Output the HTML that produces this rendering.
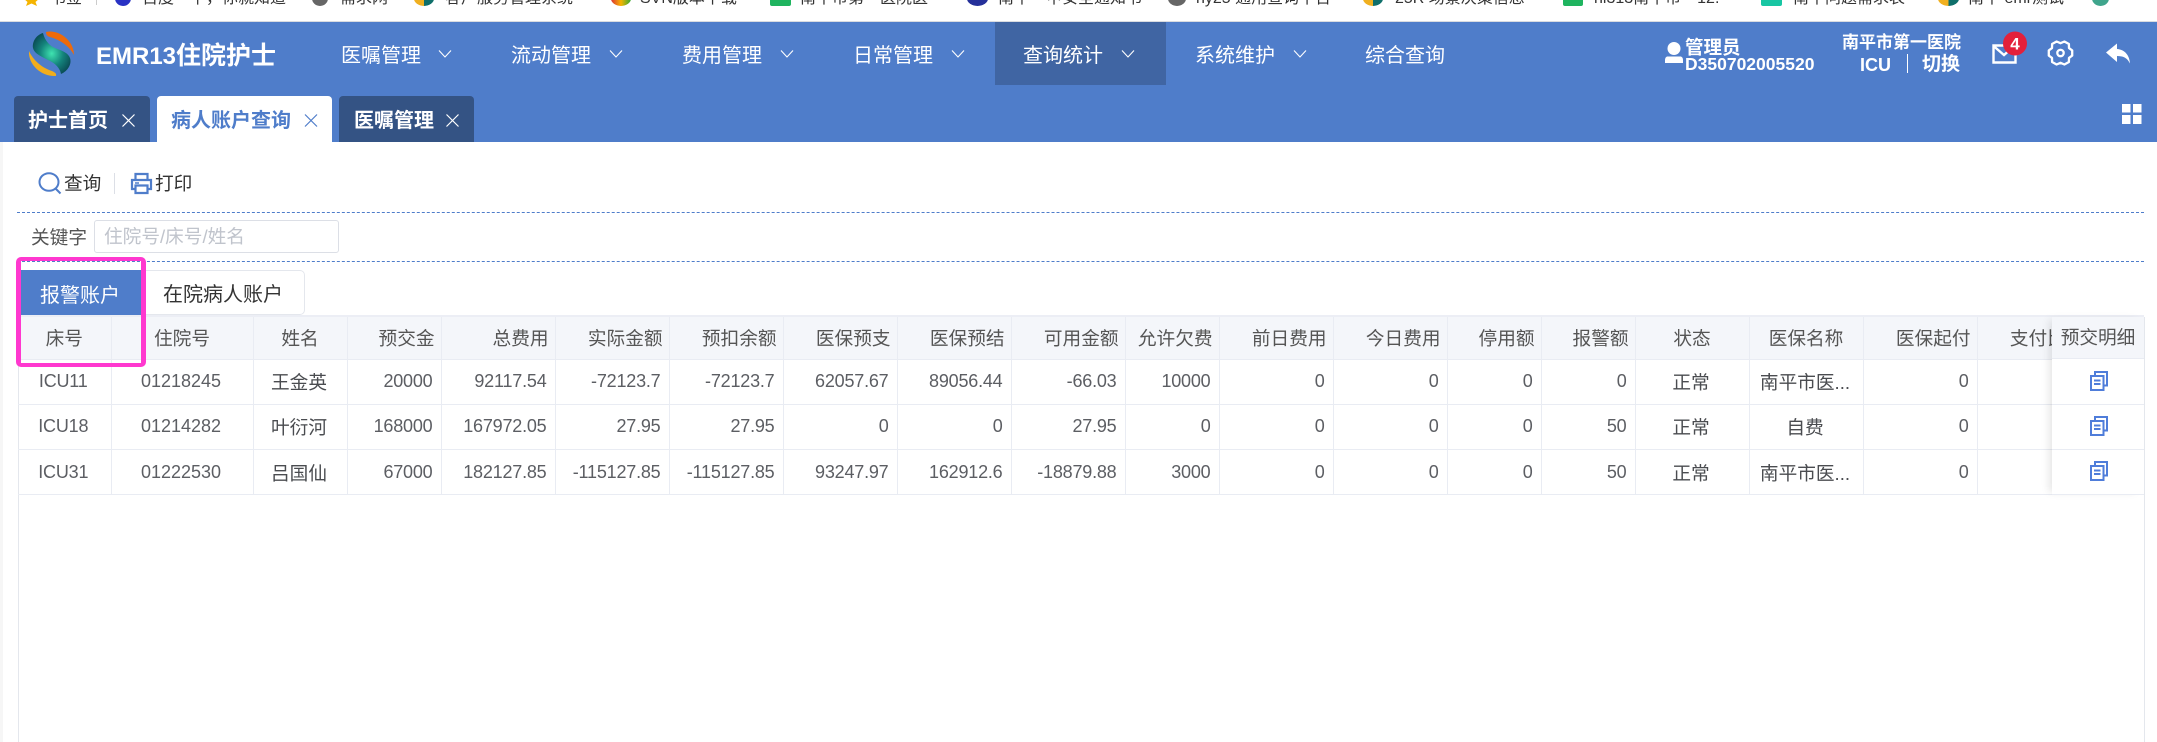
<!DOCTYPE html>
<html lang="zh-CN"><head><meta charset="utf-8"><title>病人账户查询</title>
<style>
*{box-sizing:border-box}
html,body{margin:0;padding:0;width:2157px;height:742px;overflow:hidden;background:#fff;font-family:"Liberation Sans","Noto Sans CJK SC",sans-serif;color:#606266}
.a{position:absolute;white-space:nowrap}
.bm{position:absolute;top:-9px;line-height:16px;font-size:16px;color:#333;white-space:nowrap}
.ic{position:absolute;top:-9px;height:15px;border-radius:50%}
#hd{position:absolute;left:0;top:22px;width:2157px;height:120px;background:#4f7dca}
#top{position:absolute;left:0;top:21px;width:2157px;height:1px;background:#dadce0}
.nav{position:absolute;top:44px;font-size:20px;line-height:24px;color:#fff;white-space:nowrap}
.tab{position:absolute;top:96px;height:46px;border-radius:4px 4px 0 0;background:#345384;color:#fff;font-size:20px;font-weight:bold;line-height:50px}
table{position:absolute;left:18px;top:317px;width:2073px;table-layout:fixed;border-collapse:collapse;font-size:18.67px}
td,th{height:45.3px;padding:0 8px 0 4px;border-right:1px solid #e9ecf3;border-bottom:1px solid #e9ecf3;overflow:hidden;white-space:nowrap;font-weight:normal;text-align:right}
th{background:#f4f6fa;height:42px;padding-right:6px;color:#555}
td{color:#5c5e63;font-size:18px;letter-spacing:-.2px}
td.c{text-align:center;padding:0 2px 0 0}th.c{text-align:center;padding:0}
td.n{letter-spacing:0}
td.z{font-size:18.67px;letter-spacing:0;color:#4a4c50}
</style></head><body>
<!-- bookmarks -->
<svg class="a" style="left:23px;top:-8px" width="17" height="14" viewBox="0 0 17 14"><path d="M8.500 0l2.500 6h6l-4.500 4 1.500 4-5.500-2.500L3 14l1.500-4L0 6h6z" fill="#f5b400"/></svg>
<span class="bm" style="left:50px">书签</span>
<div class="a" style="left:96px;top:0;width:1px;height:5px;background:#ccc"></div>
<div class="ic" style="left:115px;width:16px;background:#2932c4"></div>
<span class="bm" style="left:142px">百度一下，你就知道</span>
<div class="ic" style="left:312px;width:16px;background:#666"></div>
<span class="bm" style="left:340px">需求网</span>
<div class="ic" style="left:414px;width:20px;background:linear-gradient(90deg,#f0b020 50%,#0f6f6a 50%)"></div>
<span class="bm" style="left:445px">客户服务管理系统</span>
<div class="ic" style="left:611px;width:20px;background:linear-gradient(90deg,#d33,#f5b400,#3a3)"></div>
<span class="bm" style="left:640px">SVN版本下载</span>
<div class="ic" style="left:770px;width:21px;border-radius:2px;background:#1fb45f"></div>
<span class="bm" style="left:800px">南平市第一医院医</span>
<div class="ic" style="left:967px;width:21px;background:#25309a"></div>
<span class="bm" style="left:998px">南平一甲安全通知书</span>
<div class="ic" style="left:1168px;width:18px;background:#666"></div>
<span class="bm" style="left:1196px">ny25 通用查询平台</span>
<div class="ic" style="left:1363px;width:20px;background:linear-gradient(90deg,#f0b020 50%,#0f6f6a 50%)"></div>
<span class="bm" style="left:1395px">25R 场景决策信息</span>
<div class="ic" style="left:1563px;width:20px;border-radius:2px;background:#1fb45f"></div>
<span class="bm" style="left:1594px">hi313南平市一12.</span>
<div class="ic" style="left:1761px;width:21px;border-radius:2px;background:#18c6a3"></div>
<span class="bm" style="left:1793px">南平问题需求表</span>
<div class="ic" style="left:1938px;width:21px;background:linear-gradient(90deg,#f0b020 50%,#0f6f6a 50%)"></div>
<span class="bm" style="left:1968px">南平 emr测试</span>
<div class="ic" style="left:2092px;width:17px;background:#3fa58c"></div>
<div id="top"></div>
<div id="hd"></div>
<div class="a" style="left:995px;top:22px;width:171px;height:63px;background:#4065a3"></div>
<!-- logo -->
<svg class="a" style="left:0;top:0" width="100" height="90" viewBox="0 0 100 90">
<defs><radialGradient id="g" cx="50%" cy="50%" r="55%"><stop offset="0" stop-color="#3fe3b0"/><stop offset=".55" stop-color="#14847c"/><stop offset="1" stop-color="#0a4f57"/></radialGradient></defs>
<path d="M46 32C58 29 74 40 74 55C70 47 61 40 50 37Q46 36 46 32Z" fill="#ee6a0a"/>
<path d="M29 51C33 60 42 68 52 71Q57 73 56 76C42 77 28 65 29 51Z" fill="#f2ad1c"/>
<path d="M43 33C36 35 32 42 33 48C34 53 40 56 48 60C55 63 60 68 61 74C68 71 72 64 70 58C68 53 63 51 55 48C50 46 45 41 43 33Z" fill="url(#g)"/>
</svg>
<div class="a" style="left:96px;top:41px;font-size:24px;line-height:30px;font-weight:bold;color:#fff">EMR13<span style="font-size:25px">住院护士</span></div>
<!-- nav -->
<span class="nav" style="left:341px">医嘱管理</span>
<span class="nav" style="left:511px">流动管理</span>
<span class="nav" style="left:682px">费用管理</span>
<span class="nav" style="left:853px">日常管理</span>
<span class="nav" style="left:1023px">查询统计</span>
<span class="nav" style="left:1195px">系统维护</span>
<span class="nav" style="left:1365px">综合查询</span>
<svg class="a" style="left:0;top:0" width="1400" height="70" fill="none" stroke="#fff" stroke-width="1.100"><path d="M439 50.500l6 6.500 6-6.500M610 50.500l6 6.500 6-6.500M781 50.500l6 6.500 6-6.500M952 50.500l6 6.500 6-6.500M1122 50.500l6 6.500 6-6.500M1294 50.500l6 6.500 6-6.500"/></svg>
<!-- user area -->
<svg class="a" style="left:1665px;top:42px" width="18" height="22" viewBox="0 0 18 22" fill="#fff"><ellipse cx="9" cy="6.500" rx="6.500" ry="6.500"/><path d="M2 14.500h14q2 1 2 3.500v3H0v-3q0-2.500 2-3.500z"/></svg>
<div class="a" style="left:1685px;top:37px;font-size:18.500px;line-height:21px;font-weight:bold;color:#fff">管理员</div>
<div class="a" style="left:1685px;top:54px;font-size:17.500px;line-height:20px;font-weight:bold;color:#fff">D350702005520</div>
<div class="a" style="left:1842px;top:33px;font-size:17px;line-height:20px;font-weight:bold;color:#fff">南平市第一医院</div>
<div class="a" style="left:1860px;top:54px;font-size:18px;line-height:22px;font-weight:bold;color:#fff">ICU</div>
<div class="a" style="left:1907px;top:54px;width:1px;height:19px;background:#fff"></div>
<div class="a" style="left:1922px;top:53px;font-size:19px;line-height:24px;font-weight:bold;color:#fff">切换</div>
<svg class="a" style="left:1990px;top:30px" width="40" height="36" viewBox="0 0 40 36"><path d="M3.500 15.500h22v17h-22zM3.500 16l10.500 9 8-7" fill="none" stroke="#fff" stroke-width="2.400"/><circle cx="25" cy="13.500" r="12" fill="#e3203b"/><text x="25" y="19.500" text-anchor="middle" font-size="17" font-weight="bold" fill="#fff" font-family="Liberation Sans">4</text></svg>
<svg class="a" style="left:2047px;top:40px" width="27" height="26" viewBox="0 0 27 26" fill="none" stroke="#fff" stroke-width="2.300" stroke-linejoin="round"><path d="M25.200 10.400V15.600L22 17.900 21.900 22 17.400 24.500 13.500 22.800 9.600 24.500 5.100 22 5 17.900 1.800 15.600V10.400L5 8.100 5.100 4 9.600 1.500 13.500 3.200 17.400 1.500 21.900 4 22 8.100Z"/><circle cx="13.500" cy="13" r="3.200"/></svg>
<svg class="a" style="left:2106px;top:43px" width="25" height="21" viewBox="0 0 25 21" fill="#fff"><path d="M11 0.500L0 9.500 11 19v-6c6 0 10 1.500 13 7.500C23.500 12.500 19 6.500 11 6z"/></svg>
<!-- tabs -->
<div class="tab" style="left:14px;width:136px"><span class="a" style="left:14px">护士首页</span></div>
<div class="tab" style="left:157px;width:175px;background:#fff;color:#4f7dca"><span class="a" style="left:14px">病人账户查询</span></div>
<div class="tab" style="left:339px;width:135px"><span class="a" style="left:15px">医嘱管理</span></div>
<svg class="a" style="left:0;top:110px" width="480" height="20" fill="none" stroke-width="1.200"><path stroke="#fff" d="M122.500 4.500l12 12M134.500 4.500l-12 12M446.500 4.500l12 12M458.500 4.500l-12 12"/><path stroke="#4f7dca" d="M305 4.500l12 12M317 4.500l-12 12"/></svg>
<svg class="a" style="left:2121px;top:104px" width="22" height="20" fill="#fff"><rect x="1" y="0" width="8.500" height="8.500"/><rect x="12" y="0" width="8.500" height="8.500"/><rect x="1" y="11" width="8.500" height="9"/><rect x="12" y="11" width="8.500" height="9"/></svg>
<!-- side strip -->
<div class="a" style="left:0;top:142px;width:3px;height:600px;background:#f6f6f6"></div>
<!-- toolbar -->
<svg class="a" style="left:38px;top:172px" width="24" height="23" viewBox="0 0 24 23" fill="none" stroke="#4f7dca" stroke-width="2"><ellipse cx="11" cy="10" rx="9.500" ry="8.800"/><path d="M17.500 16.500l5 5"/></svg>
<div class="a" style="left:64px;top:172px;font-size:18.670px;line-height:24px;color:#333">查询</div>
<div class="a" style="left:114px;top:173px;width:1px;height:21px;background:#dcdfe6"></div>
<svg class="a" style="left:130px;top:172px" width="23" height="23" viewBox="0 0 23 23" fill="none" stroke="#4f7dca" stroke-width="2.200"><path d="M5.500 8V2h12v6M5.500 17H2V8h19v9h-3.500"/><path d="M5.500 13.500h12V21h-12z"/><path d="M5 11h4" stroke-width="1.500"/></svg>
<div class="a" style="left:155px;top:172px;font-size:18.670px;line-height:24px;color:#333">打印</div>
<div class="a" style="left:17px;top:212px;width:2127px;border-top:1px dashed #4f7dca"></div>
<div class="a" style="left:31px;top:226px;font-size:18.670px;line-height:24px;color:#555">关键字</div>
<div class="a" style="left:94px;top:220px;width:245px;height:33px;border:1px solid #dcdfe6;border-radius:3px"></div>
<div class="a" style="left:104px;top:225px;font-size:18.670px;line-height:24px;color:#c0c4cc">住院号/床号/姓名</div>
<div class="a" style="left:17px;top:261px;width:2127px;border-top:1px dashed #4f7dca"></div>
<!-- sub tabs -->
<div class="a" style="left:135px;top:270px;width:170px;height:45px;border:1px solid #e4e7ed;border-radius:0 5px 5px 0;font-size:20px;line-height:48px;color:#333;padding-left:27px">在院病人账户</div>
<div class="a" style="left:21px;top:270px;width:120px;height:45px;background:#4f7dca;color:#fff;font-size:20px;line-height:52px;text-align:center;padding-right:2px">报警账户</div>
<div class="a" style="left:18px;top:315px;width:2126px;height:2px;background:#eceef5"></div>
<div class="a" style="left:18px;top:317px;width:1px;height:425px;background:#e4e7ed"></div>
<div class="a" style="left:2144px;top:317px;width:1px;height:425px;background:#e4e7ed"></div>
<!-- table -->
<table>
<colgroup><col style="width:93px"><col style="width:142px"><col style="width:94px"><col style="width:94px"><col style="width:114px"><col style="width:114px"><col style="width:114px"><col style="width:114px"><col style="width:114px"><col style="width:114px"><col style="width:94px"><col style="width:114px"><col style="width:114px"><col style="width:94px"><col style="width:94px"><col style="width:114px"><col style="width:114px"><col style="width:114px"><col style="width:114px"></colgroup>
<tr><th class="c">床号</th><th class="c">住院号</th><th class="c">姓名</th><th>预交金</th><th>总费用</th><th>实际金额</th><th>预扣余额</th><th>医保预支</th><th>医保预结</th><th>可用金额</th><th>允许欠费</th><th>前日费用</th><th>今日费用</th><th>停用额</th><th>报警额</th><th class="c">状态</th><th class="c">医保名称</th><th>医保起付</th><th>支付比例</th></tr>
<tr><td class="c">ICU11</td><td class="c n">01218245</td><td class="c z">王金英</td><td>20000</td><td>92117.54</td><td>-72123.7</td><td>-72123.7</td><td>62057.67</td><td>89056.44</td><td>-66.03</td><td>10000</td><td>0</td><td>0</td><td>0</td><td>0</td><td class="c z">正常</td><td class="c z">南平市医...</td><td>0</td><td></td></tr>
<tr><td class="c">ICU18</td><td class="c n">01214282</td><td class="c z">叶衍河</td><td>168000</td><td>167972.05</td><td>27.95</td><td>27.95</td><td>0</td><td>0</td><td>27.95</td><td>0</td><td>0</td><td>0</td><td>0</td><td>50</td><td class="c z">正常</td><td class="c z">自费</td><td>0</td><td></td></tr>
<tr><td class="c">ICU31</td><td class="c n">01222530</td><td class="c z">吕国仙</td><td>67000</td><td>182127.85</td><td>-115127.85</td><td>-115127.85</td><td>93247.97</td><td>162912.6</td><td>-18879.88</td><td>3000</td><td>0</td><td>0</td><td>0</td><td>50</td><td class="c z">正常</td><td class="c z">南平市医...</td><td>0</td><td></td></tr>
</table>
<!-- frozen column -->
<div class="a" style="left:2052px;top:317px;width:92px;height:178px;background:#fff;box-shadow:-6px 0 8px -3px rgba(0,0,0,.1)">
<div class="a" style="left:0;top:0;width:92px;height:42px;background:#f4f6fa;border-bottom:1px solid #e9ecf3;font-size:18.670px;line-height:42px;text-align:center;color:#555">预交明细</div>
<div class="a" style="left:0;top:87px;width:92px;height:1px;background:#e9ecf3"></div>
<div class="a" style="left:0;top:132px;width:92px;height:1px;background:#e9ecf3"></div>
<div class="a" style="left:0;top:177px;width:92px;height:1px;background:#e9ecf3"></div>
</div>
<svg class="a" style="left:2089px;top:370px" width="20" height="115" fill="none" stroke="#4f7dda" stroke-width="2">
<g><path d="M6 5V2h12v13.500h-3"/><path d="M2 6h12.500v14H2z"/><path d="M5 10.500h6.500M5 14h6.500"/></g>
<g transform="translate(0,45)"><path d="M6 5V2h12v13.500h-3"/><path d="M2 6h12.500v14H2z"/><path d="M5 10.500h6.500M5 14h6.500"/></g>
<g transform="translate(0,90)"><path d="M6 5V2h12v13.500h-3"/><path d="M2 6h12.500v14H2z"/><path d="M5 10.500h6.500M5 14h6.500"/></g>
</svg>
<!-- pink highlight -->
<div class="a" style="left:16px;top:257px;width:130px;height:110px;border:4px solid #ff38cf;border-left-width:5px;border-right-width:5px;border-radius:5px"></div>
</body></html>
